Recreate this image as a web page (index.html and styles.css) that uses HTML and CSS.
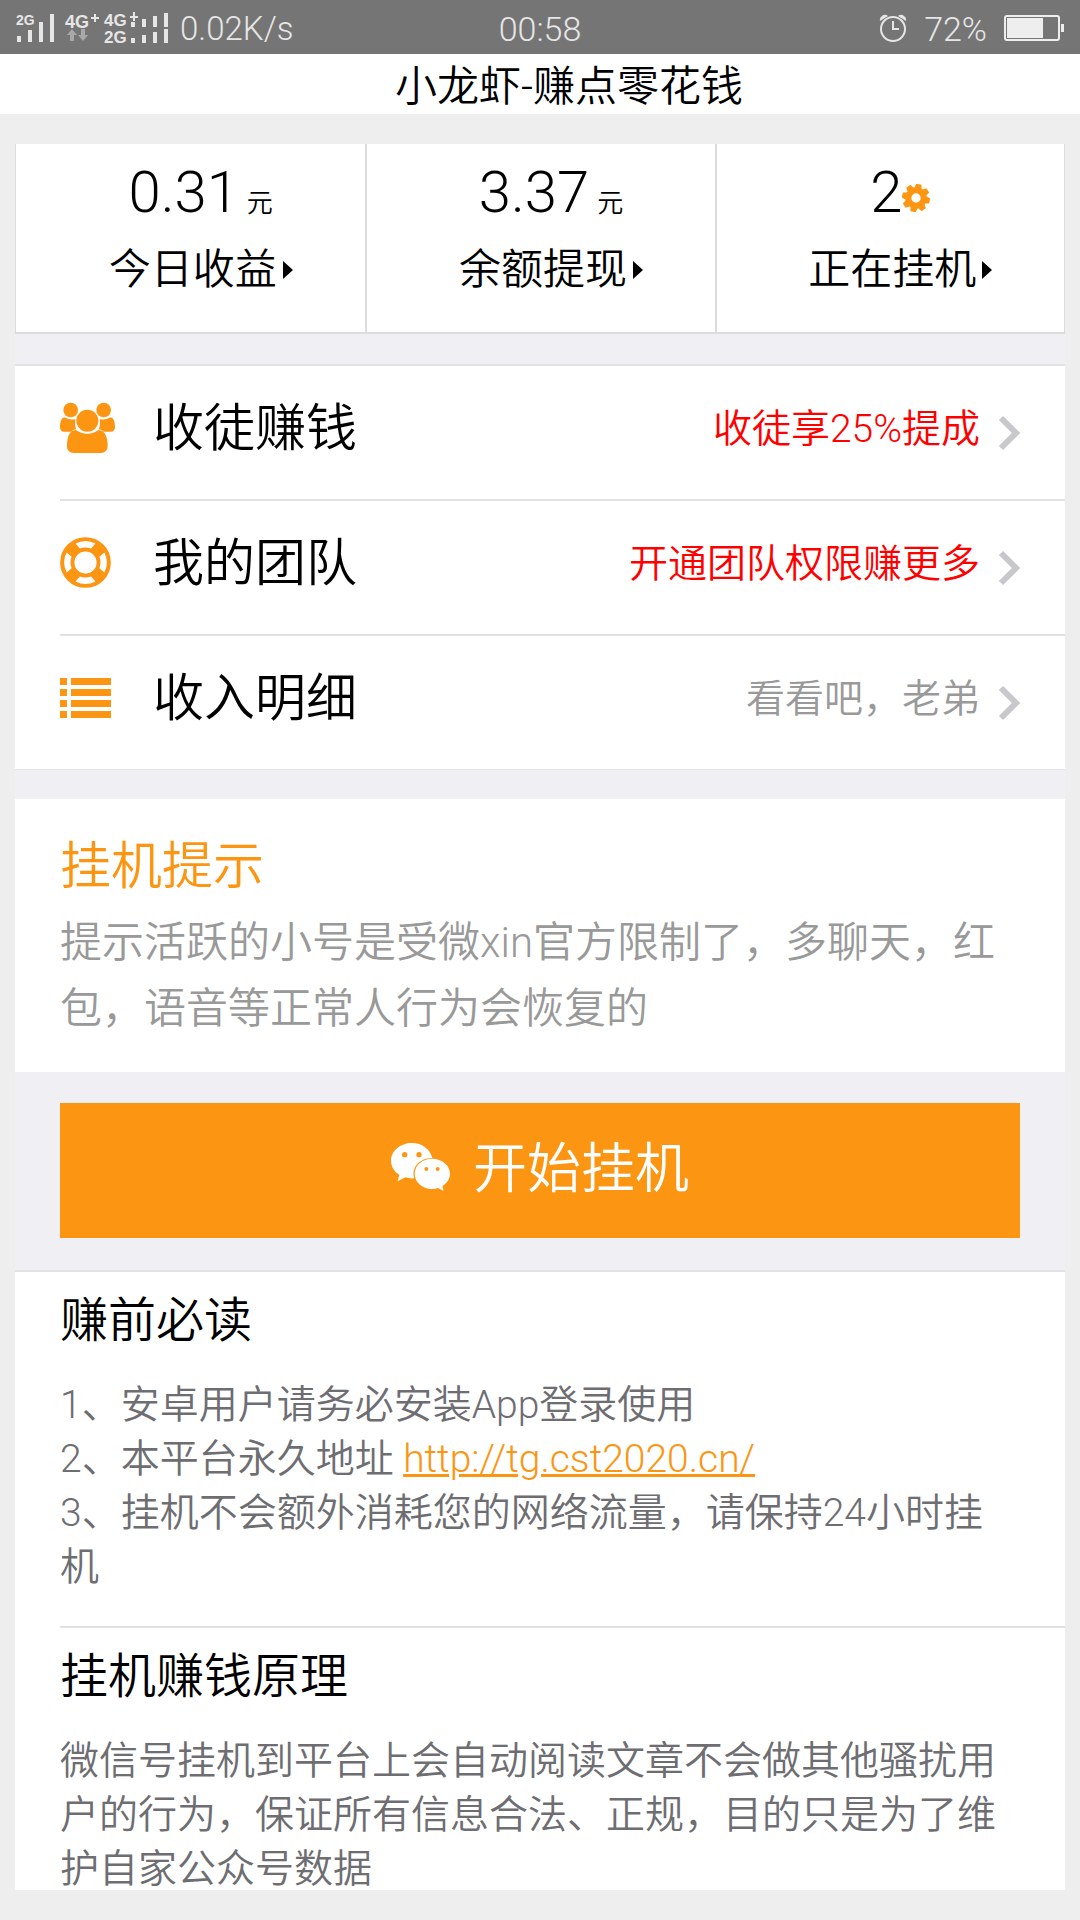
FILE: index.html
```html
<!DOCTYPE html>
<html lang="zh-CN">
<head>
<meta charset="utf-8">
<meta name="viewport" content="width=device-width">
<title>小龙虾-赚点零花钱</title>
<link rel="stylesheet" href="styles.css">
</head>
<body>
<div class="statusbar">
  <div class="status-left">
    <svg class="signals" width="154" height="46" viewBox="0 -6 154 46" role="img" aria-label="信号">
      <g font-family="Liberation Sans, Arial, sans-serif" font-weight="bold" fill="#e6e6e6">
        <text x="0" y="14" font-size="14">2G</text>
        <text x="49" y="17" font-size="18">4G</text>
        <text x="88" y="15" font-size="17">4G</text>
        <text x="88" y="32" font-size="17">2G</text>
      </g>
      <g fill="#e6e6e6">
        <path d="M1 25h4v6H1zM12 19h4v12h-4zM23 11h4v20h-4zM34 3h4v28h-4z"/>
        <path d="M75 6h8v2h-8zM78 3h2v8h-2zM114 5h8v2h-8zM117 1h2v9h-2z"/>
        <path d="M115 11h4v5h-4zM126 8h4v8h-4zM137 5h4v11h-4zM148 2h4v14h-4zM115 27h4v5h-4zM126 24h4v8h-4zM137 21h4v11h-4zM148 18h4v14h-4z"/>
      </g>
      <path fill="#a8a8a8" d="M56 18l5 6h-3v6h-4v-6h-3zM67 30l5-6h-3v-6h-4v6h-3z"/>
    </svg>
    <span>0.02K/s</span>
  </div>
  <span class="clock">00:58</span>
  <div class="status-right">
    <svg width="28" height="28" viewBox="0 0 28 28" role="img" aria-label="闹钟">
      <path fill="#e6e6e6" d="M1 7a5 5 0 0 1 8-5zM27 7a5 5 0 0 0-8-5z"/>
      <circle cx="14" cy="15" r="12" fill="#757575" stroke="#e6e6e6" stroke-width="2"/>
      <path d="M14 7v8h6" fill="none" stroke="#e6e6e6" stroke-width="2"/>
    </svg>
    <span>72%</span>
    <svg width="60" height="26" viewBox="0 0 60 26" role="img" aria-label="电池">
      <rect x="1" y="1" width="54" height="24" rx="2" fill="none" stroke="#eee" stroke-width="2"/>
      <path fill="#eee" d="M3 3h36v20H3zM57 9h3v8h-3z"/>
    </svg>
  </div>
</div>

<header class="title"><h1>小龙虾-赚点零花钱</h1></header>

<main class="page">
  <section class="stats">
    <a class="stat" href="#income">
      <span class="stat-value">0.31<small>元</small></span>
      <span class="stat-label">今日收益<i class="caret"></i></span>
    </a>
    <a class="stat" href="#withdraw">
      <span class="stat-value">3.37<small>元</small></span>
      <span class="stat-label">余额提现<i class="caret"></i></span>
    </a>
    <a class="stat" href="#running">
      <span class="stat-value">2<svg class="gear" width="28" height="28" viewBox="-42 -42 84 84" aria-hidden="true">
        <g fill="#fc9512" transform="rotate(12)">
          <path id="tooth" d="M-11-28L-8-42H8L11-28zM-11 28L-8 42H8L11 28z"/>
          <use href="#tooth" transform="rotate(45)"/><use href="#tooth" transform="rotate(90)"/><use href="#tooth" transform="rotate(135)"/>
        </g>
        <circle r="23" fill="none" stroke="#fc9512" stroke-width="18"/>
      </svg></span>
      <span class="stat-label">正在挂机<i class="caret"></i></span>
    </a>
  </section>

  <nav class="menu">
    <a class="row" href="#invite">
      <svg class="row-icon" width="55" height="51" viewBox="0 0 165 153" aria-hidden="true">
        <g fill="#fc9512">
          <circle cx="32" cy="24" r="22"/><circle cx="131" cy="24" r="22"/>
          <path d="M13 46C4 48 0 60 0 75c0 10 5 14 12 14h22c4-4 9-6 15-7-4-9-5-19-3-31-9 3-19 2-33-5zM152 46c9 2 13 14 13 29 0 10-5 14-12 14h-22c-4-4-9-6-15-7 4-9 5-19 3-31 9 3 19 2 33-5z"/>
          <circle cx="82" cy="56" r="33"/>
          <path d="M48 84c-20 1-27 20-27 49 0 12 8 20 20 20h82c12 0 20-8 20-20 0-29-8-48-28-49-9 7-20 11-33 11s-25-4-34-11z"/>
        </g>
      </svg>
      <span class="row-title">收徒赚钱</span>
      <span class="row-note hot">收徒享25%提成</span>
      <svg class="chevron" width="22" height="36" viewBox="0 0 22 36" aria-hidden="true"><path d="M3 3l15 15L3 33"/></svg>
    </a>
    <a class="row" href="#team">
      <svg class="row-icon" width="51" height="51" viewBox="-77 -77 154 154" aria-hidden="true">
        <circle r="55" fill="none" stroke="#fc9512" stroke-width="43"/>
        <g fill="#fff">
          <path id="gap" d="M-30-57A65 65 0 0 1 30-57L17-42A46 46 0 0 0-17-42z"/>
          <use href="#gap" transform="rotate(90)"/><use href="#gap" transform="rotate(180)"/><use href="#gap" transform="rotate(270)"/>
        </g>
      </svg>
      <span class="row-title">我的团队</span>
      <span class="row-note hot">开通团队权限赚更多</span>
      <svg class="chevron" width="22" height="36" viewBox="0 0 22 36" aria-hidden="true"><path d="M3 3l15 15L3 33"/></svg>
    </a>
    <a class="row" href="#detail">
      <svg class="row-icon" width="51" height="40" viewBox="0 0 51 40" aria-hidden="true">
        <path fill="#fc9512" d="M0 0h7v7H0zM11 0h40v7H11zM0 11h7v7H0zM11 11h40v7H11zM0 22h7v7H0zM11 22h40v7H11zM0 33h7v7H0zM11 33h40v7H11z"/>
      </svg>
      <span class="row-title">收入明细</span>
      <span class="row-note">看看吧，老弟</span>
      <svg class="chevron" width="22" height="36" viewBox="0 0 22 36" aria-hidden="true"><path d="M3 3l15 15L3 33"/></svg>
    </a>
  </nav>

  <section class="tip">
    <h2>挂机提示</h2>
    <p>提示活跃的小号是受微xin官方限制了，多聊天，红包，语音等正常人行为会恢复的</p>
  </section>

  <button class="start" type="button">
    <svg width="59" height="48" viewBox="0 0 177 144" aria-hidden="true">
      <path fill="#fff" d="M63 0C28 0 0 24 0 53c0 18 10 33 25 42l-5 20 23-12c8 3 18 4 27 3-10-32 14-60 54-61C117 18 93 0 63 0z"/>
      <path fill="#fff" d="M123 47c-29 0-52 20-52 45s23 46 52 46c6 0 12-1 18-3l17 9-4-15c14-9 23-22 23-37 0-25-24-45-54-45z"/>
      <g fill="#fc9512"><circle cx="41" cy="35" r="8"/><circle cx="84" cy="35" r="8"/><circle cx="106" cy="78" r="6"/><circle cx="140" cy="78" r="6"/></g>
    </svg>
    <span>开始挂机</span>
  </button>

  <section class="notes">
    <article class="note">
      <h3>赚前必读</h3>
      <p>1、安卓用户请务必安装App登录使用<br>2、本平台永久地址 <a href="http://tg.cst2020.cn/">http://tg.cst2020.cn/</a><br>3、挂机不会额外消耗您的网络流量，请保持24小时挂机</p>
    </article>
    <article class="note">
      <h3>挂机赚钱原理</h3>
      <p>微信号挂机到平台上会自动阅读文章不会做其他骚扰用户的行为，保证所有信息合法、正规，目的只是为了维护自家公众号数据</p>
    </article>
  </section>
</main>
</body>
</html>
```

FILE: styles.css
```css
* { box-sizing: border-box; }

body {
  margin: 0;
  background: #eee;
  color: #000;
  font-family: Roboto, "Noto Sans CJK SC", sans-serif;
  font-weight: 350;
}

h1, h2, h3, p { margin: 0; font-weight: 350; }
a { color: inherit; text-decoration: none; }

.statusbar {
  display: grid;
  grid-template-columns: 1fr auto 1fr;
  align-items: center;
  height: 54px;
  padding: 0 16px;
  background: #757575;
  color: #e6e6e6;
  font-family: Roboto, sans-serif;
  font-size: 34px;
  font-weight: 300;
  line-height: 54px;
}
.statusbar span { padding-top: 2px; }
.status-left, .status-right { display: flex; align-items: center; }
.status-left { gap: 10px; font-size: 33px; }
.status-right { justify-content: flex-end; gap: 17px; }

.title { padding: 6px 0 0 58px; background: #fff; text-align: center; }
.title h1 { font-size: 42px; line-height: 54px; }

.page { margin: 30px 15px; background: #efeff4; }

.stats {
  display: grid;
  grid-template-columns: repeat(3, 1fr);
  border: solid #dcdcdc;
  border-width: 0 1px 2px;
  background: #fff;
}
.stat {
  display: flex;
  flex-direction: column;
  align-items: center;
  gap: 8px;
  padding: 12px 2px 29px 22px;
}
.stat + .stat { border-left: 2px solid #dcdcdc; }
.stat-value { height: 72px; font-size: 58px; line-height: 72px; }
.stat-value small { margin-left: 8px; font-size: 26px; line-height: 26px; }
.stat-label { display: flex; align-items: center; font-size: 42px; line-height: 67px; }
.caret {
  margin-left: 6px;
  border: solid transparent;
  border-width: 9px 0 9px 10px;
  border-left-color: #000;
}

.menu {
  margin-top: 30px;
  padding-left: 45px;
  border: solid #e2e2e5;
  border-width: 2px 0 1px;
  background: #fff;
}
.row {
  box-sizing: content-box;
  display: grid;
  grid-template-columns: 93px 1fr auto 22px;
  align-items: center;
  height: 133px;
  padding-right: 45px;
}
.row + .row { border-top: 2px solid #e2e2e5; }
.row-icon { margin-bottom: 10px; }
.row-title { padding-bottom: 8px; font-size: 51px; line-height: 72px; }
.row-note { padding: 0 18px 8px 0; color: #999; font-size: 39px; line-height: 54px; }
.row-note.hot { color: #f00; }
.chevron { fill: none; stroke: #c7c7cc; stroke-width: 6; }

.tip { margin-top: 29px; padding: 32px 45px 30px; background: #fff; }
.tip h2 { color: #fc9512; font-size: 51px; line-height: 72px; }
.tip p { margin-top: 7px; color: #999; font-size: 42px; line-height: 66px; }

.start {
  display: flex;
  justify-content: center;
  align-items: center;
  gap: 23px;
  width: calc(100% - 90px);
  height: 135px;
  margin: 31px 45px 32px;
  padding: 0 0 8px;
  border: 0;
  background: #fc9512;
  color: #fff;
  font: inherit;
  font-size: 54px;
  line-height: 80px;
}
.start span { padding-top: 6px; }

.notes { display: flow-root; border-top: 2px solid #e2e2e5; background: #fff; }
.note { margin-left: 45px; padding: 13px 60px 32px 0; }
.note + .note { margin-bottom: -6px; padding-bottom: 0; border-top: 2px solid #e2e2e5; }
.note h3 { font-size: 48px; line-height: 72px; }
.note p { padding-top: 21px; color: #6d6d72; font-size: 39px; line-height: 54px; }
.note a { color: #fc9512; text-decoration: underline; }
```
